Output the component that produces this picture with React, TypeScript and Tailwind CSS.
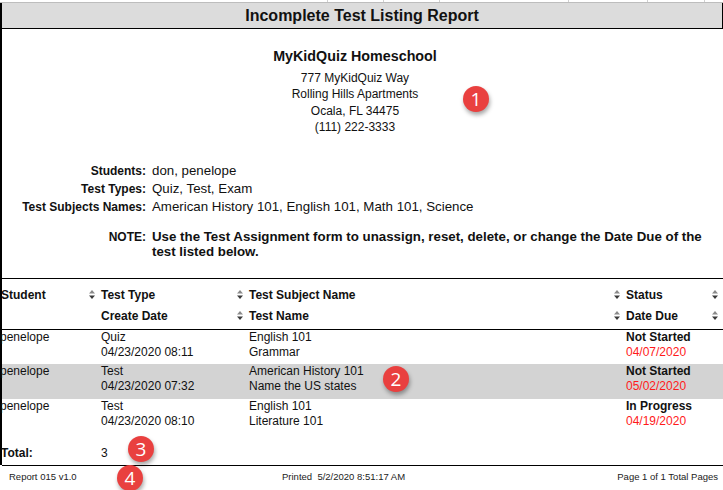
import React from 'react'

const SortIcon = () => (
  <svg width="6" height="11" viewBox="0 0 6 11" className="shrink-0">
    <path d="M0 4.5 L3 1 L6 4.5 Z" fill="#8a8a8a" />
    <path d="M0 6.5 L3 10 L6 6.5 Z" fill="#3a3a3a" />
  </svg>
)

const Badge = ({ n, className }: { n: number; className: string }) => (
  <div
    className={`absolute w-[26px] h-[26px] rounded-full bg-[#e9403f] text-white text-[19px] leading-none flex items-center justify-center shadow-[1px_3px_4px_rgba(0,0,0,0.35)] font-['Open_Sans',Arial,sans-serif] ${className}`}
  >
    {n}
  </div>
)

const rows = [
  { student: 'penelope', type: 'Quiz', created: '04/23/2020 08:11', subject: 'English 101', name: 'Grammar', status: 'Not Started', due: '04/07/2020', shade: false, h: 'h-[34px]' },
  { student: 'penelope', type: 'Test', created: '04/23/2020 07:32', subject: 'American History 101', name: 'Name the US states', status: 'Not Started', due: '05/02/2020', shade: true, h: 'h-[35px]' },
  { student: 'penelope', type: 'Test', created: '04/23/2020 08:10', subject: 'English 101', name: 'Literature 101', status: 'In Progress', due: '04/19/2020', shade: false, h: 'h-[35px]' },
]

const filters = [
  ['Students:', 'don, penelope'],
  ['Test Types:', 'Quiz, Test, Exam'],
  ['Test Subjects Names:', 'American History 101, English 101, Math 101, Science'],
]

const cols = 'grid grid-cols-[85px_148px_377px_98px_1fr]'

export default function App() {
  return (
    <div className="relative w-[723px] h-[490px] bg-white overflow-hidden text-[#111] font-['Liberation_Sans',Arial,sans-serif]">
      {/* sheet strip */}
      <div className="flex h-[3px] border-b border-[#bdbdbd]">
        <div className="w-[328px] border-r border-[#d0d0d0]" />
        <div className="w-[56px] border-r border-[#d0d0d0]" />
        <div className="w-[56px] border-r border-[#d0d0d0]" />
        <div className="w-[129px] border-r border-[#d0d0d0]" />
        <div className="w-[79px] border-r border-[#d0d0d0]" />
        <div className="w-[57px] border-r border-[#d0d0d0]" />
        <div className="flex-1" />
      </div>

      <div className="border-l-2 border-black">
        <div className="h-[26px] bg-[#dcdcdc] border-b border-r border-black flex items-center justify-center text-[16px] font-bold">
          Incomplete Test Listing Report
        </div>

        {/* school */}
        <div className="pr-[15px] text-center">
          <div className="mt-[19px] text-[14.3px] leading-[17px] font-bold">MyKidQuiz Homeschool</div>
          <div className="mt-[5px] text-[12px] leading-[16.4px]">
            <div>777 MyKidQuiz Way</div>
            <div>Rolling Hills Apartments</div>
            <div>Ocala, FL 34475</div>
            <div>(111) 222-3333</div>
          </div>
        </div>

        {/* filters */}
        <div className="mt-[26px] leading-[18px]">
          {filters.map(([k, v]) => (
            <div key={k} className="flex items-baseline">
              <div className="w-[144px] text-right font-bold shrink-0 text-[12px]">{k}</div>
              <div className="ml-[6px] text-[13.3px]">{v}</div>
            </div>
          ))}
        </div>
        <div className="mt-[13.5px] flex items-baseline leading-[15px] font-bold pr-[10px]">
          <div className="w-[144px] text-right shrink-0 text-[12px]">NOTE:</div>
          <div className="ml-[6px] text-[13.3px]">
            Use the Test Assignment form to unassign, reset, delete, or change the Date Due of the test listed below.
          </div>
        </div>

        {/* table header */}
        <div className="mt-[19px] -ml-[2px] pl-[2px] border-t border-black border-b pt-[5px] pb-[3px] text-[12px] font-bold">
          <div className={`${cols} h-[21px] items-center`}>
            <div className="-ml-[1px]">Student</div>
            <div className="flex items-center gap-[6px] pl-[2px]"><SortIcon />Test Type</div>
            <div className="flex items-center gap-[6px] pl-[2px]"><SortIcon />Test Subject Name</div>
            <div className="flex items-center gap-[6px] pl-[2px]"><SortIcon />Status</div>
            <div className="flex items-center pl-[2px]"><SortIcon /></div>
          </div>
          <div className={`${cols} h-[21px] items-center`}>
            <div />
            <div className="pl-[14px]">Create Date</div>
            <div className="flex items-center gap-[6px] pl-[2px]"><SortIcon />Test Name</div>
            <div className="flex items-center gap-[6px] pl-[2px]"><SortIcon />Date Due</div>
            <div className="flex items-center pl-[2px]"><SortIcon /></div>
          </div>
        </div>

        {/* rows */}
        <div className="text-[12px] leading-[15px]">
          {rows.map((r, i) => (
            <div key={i} className={`${cols} ${r.h} ${r.shade ? 'bg-[#d3d3d3]' : ''}`}>
              <div className="-ml-[2px]">{r.student}</div>
              <div className="pl-[14px]">
                <div>{r.type}</div>
                <div>{r.created}</div>
              </div>
              <div className="pl-[14px]">
                <div>{r.subject}</div>
                <div>{r.name}</div>
              </div>
              <div className="pl-[14px] whitespace-nowrap">
                <div className="font-bold">{r.status}</div>
                <div className="text-[#ff1a1a]">{r.due}</div>
              </div>
              <div />
            </div>
          ))}
        </div>

        <div className={`${cols} pt-[12px] pb-[4px] text-[12px] leading-[15px]`}>
          <div className="font-bold -ml-[1px]">Total:</div>
          <div className="pl-[14px]">3</div>
        </div>
      </div>

      {/* footer */}
      <div className="ml-[2px] border-t border-black h-[22px] flex items-center text-[9.5px] text-[#222]">
        <div className="w-[280px] pl-[7px]">Report 015 v1.0</div>
        <div className="flex-1 whitespace-pre">Printed  5/2/2020 8:51:17 AM</div>
        <div className="pr-[5px]">Page 1 of 1 Total Pages</div>
      </div>

      <Badge n={1} className="left-[463px] top-[86px]" />
      <Badge n={2} className="left-[383px] top-[366px]" />
      <Badge n={3} className="left-[128px] top-[436px]" />
      <Badge n={4} className="left-[117px] top-[465px]" />
    </div>
  )
}
